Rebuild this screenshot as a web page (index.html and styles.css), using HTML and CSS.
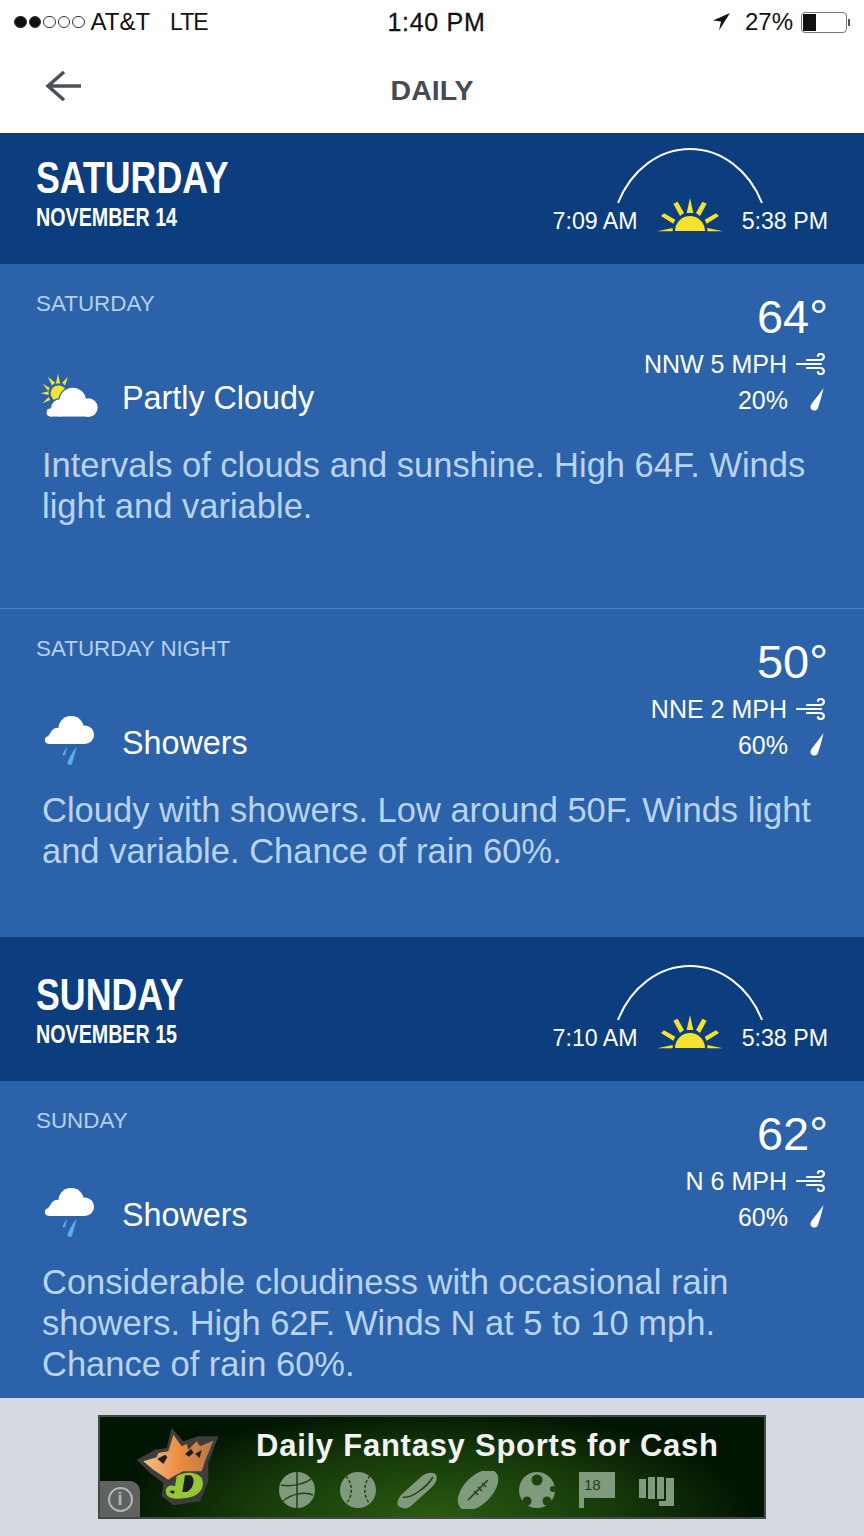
FILE: index.html
```html
<!doctype html>
<html lang="en">
<head>
    <meta charset="UTF-8">
    <title>Daily</title>
    <link rel="stylesheet" href="styles.css">
</head>
<body>
    <svg class="defs" width="0" height="0">
        <symbol id="rise" viewBox="380 180 204 105">
            <path d="M437 282a45 45 0 0 1 90 0z" fill="#f5e22c"/>
            <path d="M482 183l10 45h-20zM432 200l13-6 19 34-12 9zM532 200l-13-6-19 34 12 9zM395 237l9-8 34 19-6 12zM569 237l-9-8-34 19 6 12zM383 283l47-10v10zM581 283l-47-10v10z" fill="#f5e22c"/>
        </symbol>
        <symbol id="wind" viewBox="0 0 30 22">
            <g fill="none" stroke="#fff" stroke-width="2.2" stroke-linecap="round">
                <path d="M11 7h13c5 0 5-6 1-6-2 0-3 1-3 2"/>
                <path d="M1 11h24"/>
                <path d="M11 15h13c5 0 5 6 1 6-2 0-3-1-3-2"/>
            </g>
        </symbol>
        <symbol id="drop" viewBox="0 0 14 24">
            <path d="M13.5 0C12 7 10 14 8 20c-1.500 4-8 3-7.500-1 0-2 1-3 2.500-5C6 10 10 5 13.500 0z" fill="#fff"/>
        </symbol>
        <symbol id="rain" viewBox="40 35 190 150">
            <g fill="#fff">
                <circle cx="140" cy="72" r="38"/>
                <circle cx="181" cy="91" r="28"/>
                <circle cx="100" cy="94" r="24"/>
                <circle cx="72" cy="107" r="11"/>
                <rect x="72" y="90" width="110" height="29"/>
            </g>
            <path d="M128 127l-6 24c-2 5-8 4-7 -1 1-5 7-16 13-23zM157 127l-14 50c-2 7-14 6-14-1 1-8 16-36 28-49z" fill="#5ab0e6"/>
        </symbol>
        <symbol id="partly" viewBox="40 35 190 150">
            <g fill="#f5e22c">
                <circle cx="102" cy="102" r="24"/>
                <path d="M100 43l7 29H94zM70 52l22 18-10 8zM130 52l-8 26-9-8zM54 73l21 12-4 10zM48 102l24-6v11zM54 132l18-19 5 9z"/>
            </g>
            <g fill="#2b62a9">
                <circle cx="145" cy="125" r="44"/>
                <circle cx="105" cy="145" r="29"/>
            </g>
            <g fill="#fff">
                <circle cx="145" cy="125" r="40"/>
                <circle cx="192" cy="145" r="28"/>
                <circle cx="106" cy="146" r="26"/>
                <circle cx="78" cy="160" r="12"/>
                <rect x="78" y="145" width="114" height="27"/>
            </g>
        </symbol>
    </svg>

    <div class="status-bar">
        <div class="status-left">
            <span class="signal">
                <i class="dot on"></i><i class="dot on"></i><i class="dot"></i><i class="dot"></i><i class="dot"></i>
            </span>
            <span class="carrier">AT&amp;T</span>
            <span class="network">LTE</span>
        </div>
        <div class="status-time">1:40 PM</div>
        <div class="status-right">
            <svg class="locate" viewBox="0 0 18 18"><path d="M17 0L0 7.500l8 1-2 9z" fill="#111"/></svg>
            <span class="battery-pct">27%</span>
            <span class="battery"><i class="battery-level"></i></span>
            <i class="battery-tip"></i>
        </div>
    </div>

    <div class="nav-bar">
        <svg class="back" viewBox="0 0 36 30"><path d="M19 1L3 15l16 14M3 15h33" fill="none" stroke="#4a5158" stroke-width="3.500"/></svg>
        <h1 class="nav-title">DAILY</h1>
    </div>

    <div class="day-head">
        <div class="day-name">
            <h2>SATURDAY</h2>
            <p>NOVEMBER 14</p>
        </div>
        <div class="sun-times">
            <svg class="arc" viewBox="0 0 146 56"><path d="M1 55C14 22 42 1 73 1s59 21 72 54" fill="none" stroke="#fff" stroke-width="2"/></svg>
            <div class="sun-row">
                <span>7:09 AM</span>
                <svg class="sun-icon"><use href="#rise"/></svg>
                <span>5:38 PM</span>
            </div>
        </div>
    </div>

    <div class="period period-first">
        <div class="period-top">
            <div class="period-left">
                <div class="period-label">SATURDAY</div>
                <div class="condition">
                    <svg class="cond-icon"><use href="#partly"/></svg>
                    <span>Partly Cloudy</span>
                </div>
            </div>
            <div class="period-right">
                <div class="temp">64°</div>
                <div class="stat stat-wind"><span>NNW 5 MPH</span><svg class="wind-icon"><use href="#wind"/></svg></div>
                <div class="stat"><span>20%</span><svg class="drop-icon"><use href="#drop"/></svg></div>
            </div>
        </div>
        <p class="desc">Intervals of clouds and sunshine. High 64F. Winds light and variable.</p>
    </div>

    <div class="period period-second">
        <div class="period-top">
            <div class="period-left">
                <div class="period-label">SATURDAY NIGHT</div>
                <div class="condition">
                    <svg class="cond-icon"><use href="#rain"/></svg>
                    <span>Showers</span>
                </div>
            </div>
            <div class="period-right">
                <div class="temp">50°</div>
                <div class="stat stat-wind"><span>NNE 2 MPH</span><svg class="wind-icon"><use href="#wind"/></svg></div>
                <div class="stat"><span>60%</span><svg class="drop-icon"><use href="#drop"/></svg></div>
            </div>
        </div>
        <p class="desc">Cloudy with showers. Low around 50F. Winds light and variable. Chance of rain 60%.</p>
    </div>

    <div class="day-head day-head-next">
        <div class="day-name">
            <h2>SUNDAY</h2>
            <p>NOVEMBER 15</p>
        </div>
        <div class="sun-times">
            <svg class="arc" viewBox="0 0 146 56"><path d="M1 55C14 22 42 1 73 1s59 21 72 54" fill="none" stroke="#fff" stroke-width="2"/></svg>
            <div class="sun-row">
                <span>7:10 AM</span>
                <svg class="sun-icon"><use href="#rise"/></svg>
                <span>5:38 PM</span>
            </div>
        </div>
    </div>

    <div class="period period-third">
        <div class="period-top">
            <div class="period-left">
                <div class="period-label">SUNDAY</div>
                <div class="condition">
                    <svg class="cond-icon"><use href="#rain"/></svg>
                    <span>Showers</span>
                </div>
            </div>
            <div class="period-right">
                <div class="temp">62°</div>
                <div class="stat stat-wind"><span>N 6 MPH</span><svg class="wind-icon"><use href="#wind"/></svg></div>
                <div class="stat"><span>60%</span><svg class="drop-icon"><use href="#drop"/></svg></div>
            </div>
        </div>
        <p class="desc">Considerable cloudiness with occasional rain showers. High 62F. Winds N at 5 to 10 mph. Chance of rain 60%.</p>
    </div>

    <div class="ad-bar">
        <div class="ad">
            <svg class="ad-logo" viewBox="0 0 300 270">
                <defs>
                    <linearGradient id="crown" x1="0" x2="1" y1="0" y2="0">
                        <stop offset="0" stop-color="#f6bd85"/>
                        <stop offset="0.55" stop-color="#e98a3c"/>
                        <stop offset="1" stop-color="#b5764a"/>
                    </linearGradient>
                </defs>
                <path d="M20 125l55-30 35-5 15-60 35 40 45-15 60 0-30 80v55l-25 60-80 12-35-27 5-40-40-30z" fill="#3d3d3d"/>
                <path d="M40 130l40-12 5-13 30-5 15-50 25 35 15-7 5 17 25-25 10 15 40-17-25 62-10 30h-55l-30 15-15 10-45-30z" fill="url(#crown)"/>
                <path d="M82 122l24-12 6 8-12 20zM165 108l18-16 8 12-14 12zM195 108l20-12-6 24z" fill="#1e1e1e"/>
                <path d="M108 225c-5-20 15-27 27-20l5-30c20-15 60-15 75 5 10 20 0 45-25 55-25 8-77 15-82-10z" fill="#93c733"/>
                <path d="M165 172h16c15 6 14 36-10 50h-14zM118 222c5-6 12-6 16-2l-3 8c-4-3-8-3-13-6z" fill="#1c1c1c"/>
            </svg>
            <div class="ad-main">
                <div class="ad-title">Daily Fantasy Sports for Cash</div>
                <svg class="ad-icons" viewBox="0 0 400 38">
                    <g fill="#7f9a7d">
                        <circle cx="19" cy="19" r="18"/>
                        <circle cx="80" cy="19" r="18"/>
                        <path d="M122 36c-4-1-3-8 2-13l20-18c6-4 12-4 14-1 2 4 0 8-5 13l-20 18c-4 3-8 3-11 1z"/>
                        <ellipse cx="200" cy="19" rx="25" ry="14" transform="rotate(-45 200 19)"/>
                        <circle cx="259" cy="19" r="18"/>
                        <path d="M301 1h36v26h-31v10h-5z"/>
                        <path d="M361 8h7v19h-7zM370 6h7v22h-7zM379 6h7v22h-7zM388 7h8v24h-8zM381 30h15v5h-15z"/>
                    </g>
                    <g fill="none" stroke="#1e4410" stroke-width="1.500">
                        <path d="M3 14c10 2 26-1 32-8M19 1v36M5 30c8-7 22-10 30-6"/>
                        <path d="M68 5c7 8 7 20 0 28M92 5c-7 8-7 20 0 28" stroke-dasharray="3 2"/>
                        <path d="M125 26c8 2 24-10 30-20"/>
                        <path d="M190 29l20-20M196 20l4 4M200 16l4 4M204 12l4 4"/>
                    </g>
                    <g fill="#1e4410">
                        <circle cx="259" cy="9" r="5.500"/>
                        <circle cx="249" cy="30" r="4.500"/>
                        <circle cx="269" cy="30" r="4.500"/>
                        <circle cx="275" cy="18" r="3"/>
                    </g>
                    <text x="306" y="19" class="ad-flag-no">18</text>
                </svg>
            </div>
            <div class="ad-info"><span>i</span></div>
        </div>
    </div>
</body>
</html>
```

FILE: styles.css
```css
* {
    box-sizing: border-box;
}
body {
    font-family: "Liberation Sans", Arial, sans-serif;
    margin: 0;
    width: 864px;
    height: 1536px;
    overflow: hidden;
    background-color: #fff;
}
h1, h2, p {
    margin: 0;
    font-weight: normal;
}
.defs {
    position: absolute;
}

/* status bar */
.status-bar {
    height: 44px;
    display: grid;
    grid-template-columns: 1fr auto 1fr;
    align-items: center;
    font-size: 24px;
    color: #111;
    padding: 0 14px;
}
.status-left {
    display: flex;
    align-items: center;
}
.signal {
    display: flex;
    gap: 2px;
    margin-right: 6px;
}
.dot {
    width: 12.5px;
    height: 12.5px;
    border-radius: 50%;
    border: 1px solid #333;
}
.dot.on {
    background-color: #111;
}
.carrier {
    margin-right: 20px;
}
.network {
    font-size: 23px;
    letter-spacing: -1px;
}
.status-time {
    font-size: 25px;
    letter-spacing: 0.7px;
    -webkit-text-stroke: 0.3px #111;
    margin-left: 9px;
}
.status-right {
    display: flex;
    align-items: center;
    justify-content: flex-end;
}
.locate {
    width: 18px;
    height: 18px;
    margin-right: 14px;
}
.battery-pct {
    margin-right: 8px;
}
.battery {
    width: 46px;
    height: 21px;
    border: 1px solid #777;
    border-radius: 4px;
    padding: 1px;
    display: block;
}
.battery-level {
    display: block;
    width: 13px;
    height: 100%;
    background-color: #111;
}
.battery-tip {
    width: 2px;
    height: 7px;
    background-color: #555;
    margin-left: 1px;
}

/* nav */
.nav-bar {
    height: 89px;
    position: relative;
    display: flex;
    align-items: center;
    justify-content: center;
    padding-top: 3px;
}
.back {
    position: absolute;
    left: 45px;
    top: 27px;
    width: 36px;
    height: 30px;
}
.nav-title {
    font-size: 28.5px;
    font-weight: bold;
    color: #454b52;
}

/* day header */
.day-head {
    height: 131px;
    background-color: #0b3d7f;
    color: #fff;
    display: flex;
    justify-content: space-between;
    padding: 15px 36px 0;
}
.day-head-next {
    height: 144px;
    padding-top: 28px;
}
.day-name {
    padding-top: 5px;
}
.day-name h2 {
    font-size: 45px;
    font-weight: bold;
    line-height: 50px;
    transform: scaleX(0.794);
    transform-origin: left;
}
.day-name p {
    font-size: 25px;
    font-weight: bold;
    line-height: 28px;
    transform: scaleX(0.787);
    transform-origin: left;
}
.sun-times {
    display: flex;
    flex-direction: column;
    align-items: center;
}
.arc {
    width: 146px;
    height: 56px;
    display: block;
}
.sun-row {
    display: flex;
    align-items: flex-end;
    gap: 18px;
    font-size: 23.2px;
    margin-top: -7px;
}
.sun-row span {
    line-height: 30px;
}
.sun-icon {
    width: 68px;
    height: 35px;
    margin-bottom: 4px;
}

/* forecast periods */
.period {
    background-color: #2b62a9;
    color: #fff;
    padding: 28px 36px 0;
}
.period-first {
    height: 345px;
    border-bottom: 1px solid #4d82c9;
}
.period-second {
    height: 328px;
}
.period-third {
    height: 317px;
}
.period-top {
    display: flex;
    justify-content: space-between;
}
.period-label {
    font-size: 22.4px;
    line-height: 24px;
    color: #b4d0f0;
}
.condition {
    display: flex;
    align-items: center;
    font-size: 32.3px;
    line-height: 40px;
    margin-top: 55px;
}
.cond-icon {
    width: 63px;
    height: 50px;
    margin: 0 21px 4px 2px;
    flex-shrink: 0;
}
.period-right {
    display: flex;
    flex-direction: column;
    align-items: flex-end;
}
.temp {
    font-size: 47px;
    line-height: 50px;
}
.stat {
    display: flex;
    align-items: center;
    justify-content: flex-end;
    font-size: 25px;
    line-height: 30px;
    margin-top: 6px;
}
.stat-wind {
    margin-top: 7px;
}
.wind-icon {
    width: 30px;
    height: 22px;
    margin-left: 9px;
    margin-right: 2px;
}
.drop-icon {
    width: 14px;
    height: 24px;
    margin-left: 22px;
    margin-right: 4px;
}
.desc {
    font-size: 34.5px;
    line-height: 41px;
    color: #b9d3f2;
    margin: 20px 0 0 6px;
    width: 780px;
}

/* ad */
.ad-bar {
    height: 138px;
    background-color: #d5dae2;
    padding: 17px 98px 0;
}
.ad {
    width: 668px;
    height: 104px;
    border: 2px solid #45494a;
    background: radial-gradient(ellipse 320px 110px at 50% 100%, #2b5a10 0%, #173c0a 55%, #021502 100%);
    display: flex;
    position: relative;
}
.ad-logo {
    width: 100px;
    height: 90px;
    margin: 1px 0 0 30px;
    flex-shrink: 0;
}
.ad-main {
    margin-left: 26px;
}
.ad-title {
    font-size: 31px;
    font-weight: bold;
    color: #f3f3f3;
    line-height: 34px;
    margin-top: 12px;
    letter-spacing: 0.75px;
    white-space: nowrap;
}
.ad-icons {
    display: block;
    width: 400px;
    height: 38px;
    margin: 8px 0 0 22px;
}
.ad-flag-no {
    font-size: 15px;
    fill: #1e4410;
}
.ad-info {
    position: absolute;
    left: 0;
    bottom: 0;
    width: 40px;
    height: 36px;
    background-color: #5f625f;
    border-top-right-radius: 10px;
    display: flex;
    align-items: center;
    justify-content: center;
}
.ad-info span {
    width: 25px;
    height: 25px;
    border: 2px solid #b4b8b4;
    border-radius: 50%;
    color: #b4b8b4;
    font-size: 18px;
    font-weight: bold;
    line-height: 21px;
    text-align: center;
}
```
